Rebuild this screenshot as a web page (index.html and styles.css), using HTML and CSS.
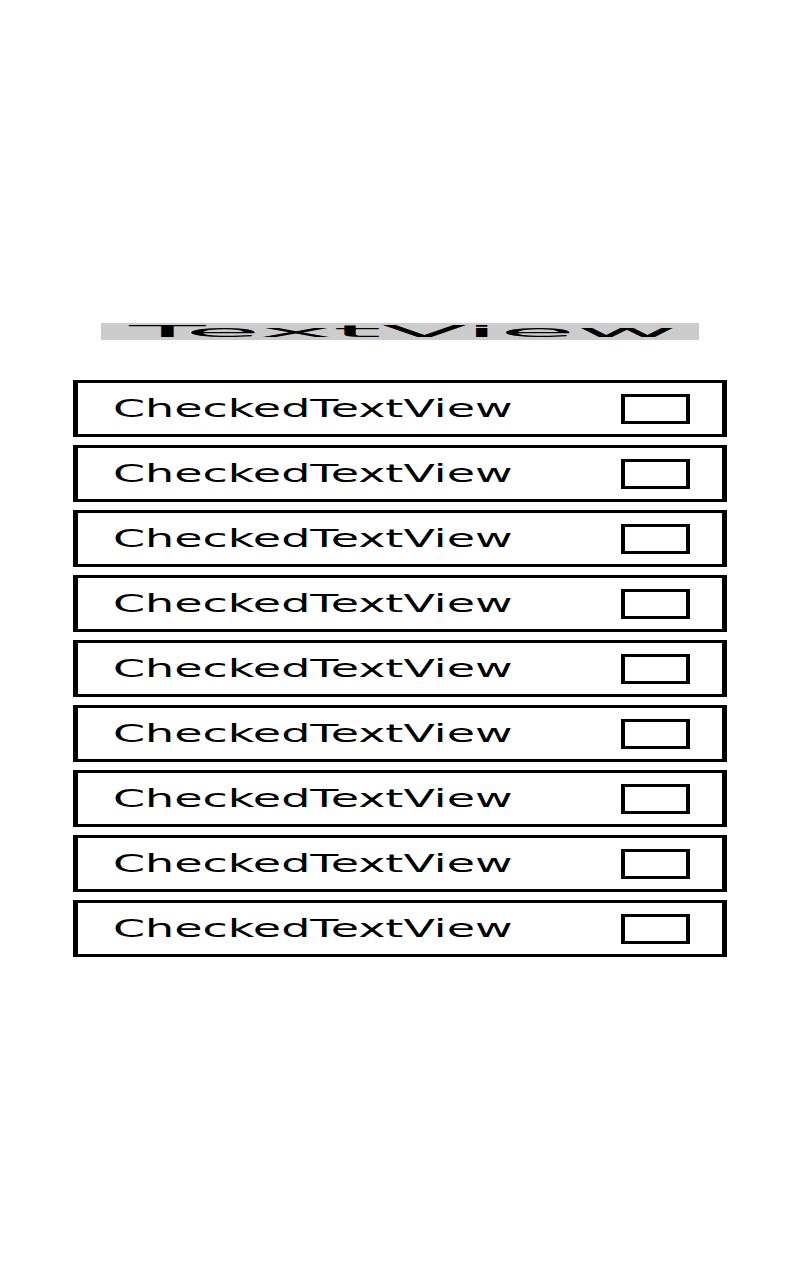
FILE: index.html
```html
<!DOCTYPE html>
<html lang="en">
<head>
    <title>CheckedTextView list</title>
    <link rel="stylesheet" href="styles.css">
</head>
<body>
    <div class="screen">
        <div class="title"><span class="title-text">TextView</span></div>
        <div class="list">
            <div class="item"><span class="label">CheckedTextView</span><span class="check"></span></div>
            <div class="item"><span class="label">CheckedTextView</span><span class="check"></span></div>
            <div class="item"><span class="label">CheckedTextView</span><span class="check"></span></div>
            <div class="item"><span class="label">CheckedTextView</span><span class="check"></span></div>
            <div class="item"><span class="label">CheckedTextView</span><span class="check"></span></div>
            <div class="item"><span class="label">CheckedTextView</span><span class="check"></span></div>
            <div class="item"><span class="label">CheckedTextView</span><span class="check"></span></div>
            <div class="item"><span class="label">CheckedTextView</span><span class="check"></span></div>
            <div class="item"><span class="label">CheckedTextView</span><span class="check"></span></div>
        </div>
    </div>
</body>
</html>
```

FILE: styles.css
```css
body {
    margin: 0;
    background-color: #ffffff;
    font-family: "DejaVu Sans", sans-serif;
    color: #000000;
}
.screen {
    height: 100vh;
    display: flex;
    flex-direction: column;
    align-items: center;
    justify-content: center;
    gap: 40px;
}
.title {
    width: 598px;
    height: 17px;
    background-color: #cccccc;
    display: flex;
    justify-content: center;
    overflow: hidden;
}
.title-text {
    display: inline-block;
    font-size: 16px;
    line-height: 17px;
    padding-left: 1px;
    transform: scaleX(7.8);
    transform-origin: center;
}
.list {
    display: flex;
    flex-direction: column;
    gap: 8px;
}
.item {
    width: 577px;
    height: 51px;
    border-style: solid;
    border-color: #000000;
    border-width: 3px 5px;
    display: flex;
    align-items: center;
    justify-content: space-between;
    padding: 0 32px 0 35px;
}
.label {
    display: inline-block;
    font-size: 25px;
    line-height: 30px;
    transform: scaleX(1.84);
    transform-origin: left center;
}
.check {
    width: 61px;
    height: 24px;
    border-style: solid;
    border-color: #000000;
    border-width: 3px 4px;
}
```
